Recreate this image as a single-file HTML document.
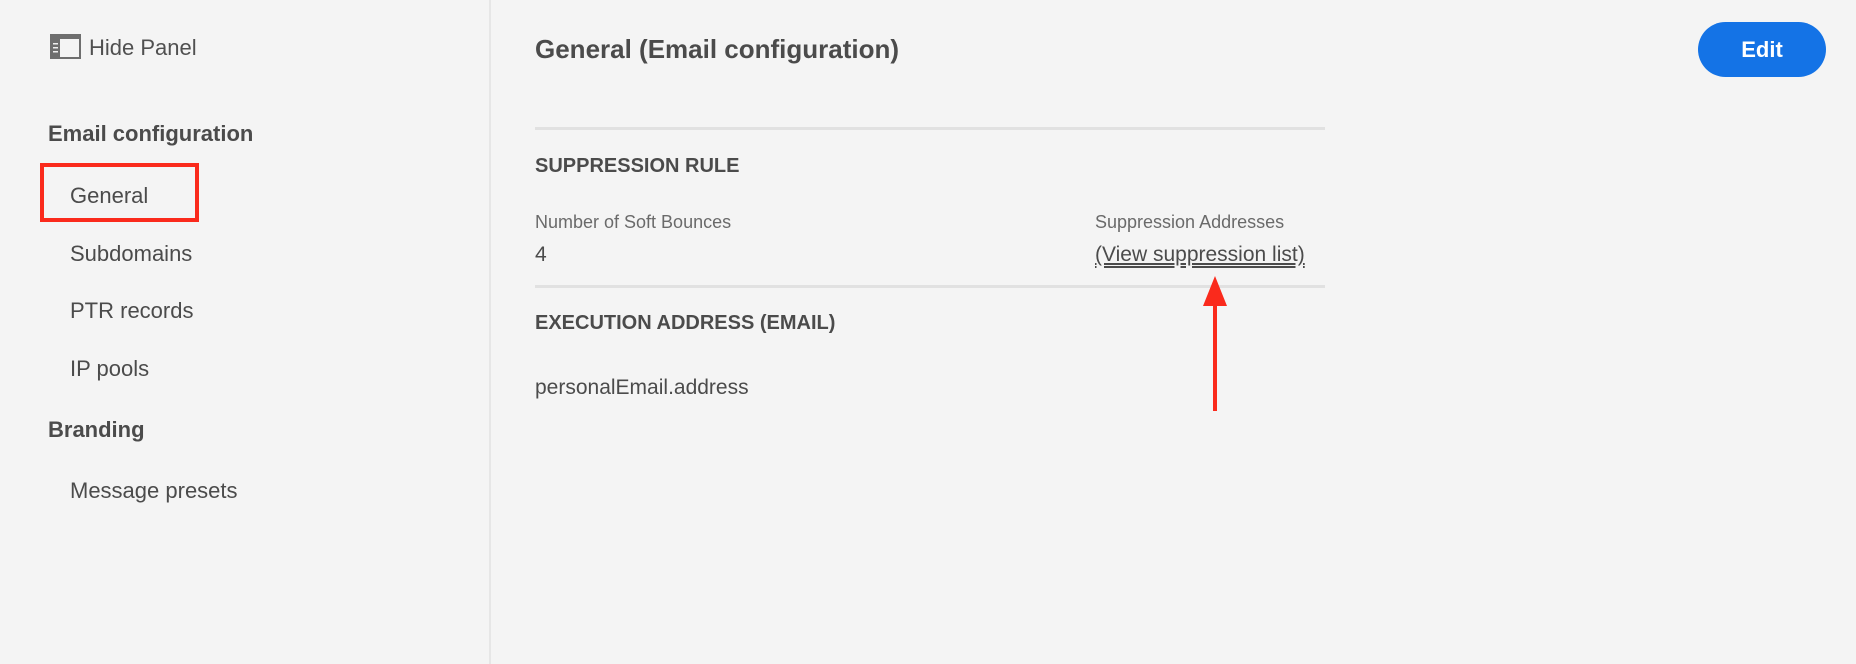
<!DOCTYPE html>
<html><head><style>
body{margin:0;width:1856px;height:664px;background:#f4f4f4;font-family:"Liberation Sans",sans-serif;color:#4b4b4b;position:relative;overflow:hidden}
.a{position:absolute;white-space:nowrap;line-height:1}
</style></head><body>
<div class="a" style="left:489px;top:0;width:2px;height:664px;background:#e6e6e6"></div>
<svg class="a" style="left:50px;top:34px" width="31" height="25" viewBox="0 0 31 25"><rect x="1" y="1" width="29" height="23" fill="none" stroke="#6e6e6e" stroke-width="2"/><rect x="1" y="1" width="29" height="4" fill="#6e6e6e"/><rect x="1" y="1" width="9" height="23" fill="#6e6e6e"/><rect x="3" y="9" width="5" height="1.5" fill="#eee"/><rect x="3" y="13" width="5" height="1.5" fill="#eee"/><rect x="3" y="17" width="5" height="1.5" fill="#eee"/></svg>
<div class="a" style="left:89px;top:37px;font-size:22px;color:#505050">Hide Panel</div>
<div class="a" style="left:48px;top:123px;font-size:22px;font-weight:bold">Email configuration</div>
<div class="a" style="left:40px;top:163px;width:151px;height:51px;border:4px solid #fa2a1c"></div>
<div class="a" style="left:70px;top:185px;font-size:22px">General</div>
<div class="a" style="left:70px;top:243px;font-size:22px">Subdomains</div>
<div class="a" style="left:70px;top:300px;font-size:22px">PTR records</div>
<div class="a" style="left:70px;top:358px;font-size:22px">IP pools</div>
<div class="a" style="left:48px;top:419px;font-size:22px;font-weight:bold">Branding</div>
<div class="a" style="left:70px;top:480px;font-size:22px">Message presets</div>
<div class="a" style="left:535px;top:36px;font-size:26px;font-weight:bold">General (Email configuration)</div>
<div class="a" style="left:1698px;top:22px;width:128px;height:55px;border-radius:28px;background:#1473e6;color:#fff;font-size:22px;font-weight:bold;text-align:center;line-height:55px">Edit</div>
<div class="a" style="left:535px;top:127px;width:790px;height:3px;background:#e1e1e1"></div>
<div class="a" style="left:535px;top:156px;font-size:20px;font-weight:bold">SUPPRESSION RULE</div>
<div class="a" style="left:535px;top:213px;font-size:18px;color:#6a6a6a">Number of Soft Bounces</div>
<div class="a" style="left:535px;top:244px;font-size:21px">4</div>
<div class="a" style="left:1095px;top:213px;font-size:18px;color:#6a6a6a">Suppression Addresses</div>
<div class="a" style="left:1095px;top:244px;font-size:21px;text-decoration:underline double">(View suppression list)</div>
<div class="a" style="left:535px;top:285px;width:790px;height:3px;background:#e1e1e1"></div>
<div class="a" style="left:535px;top:313px;font-size:20px;font-weight:bold">EXECUTION ADDRESS (EMAIL)</div>
<div class="a" style="left:535px;top:377px;font-size:21px">personalEmail.address</div>
<svg class="a" style="left:1200px;top:274px" width="30" height="139"><polygon points="15,2 3,32 27,32" fill="#fa2a1c"/><rect x="13" y="30" width="4" height="107" fill="#fa2a1c"/></svg>
</body></html>
